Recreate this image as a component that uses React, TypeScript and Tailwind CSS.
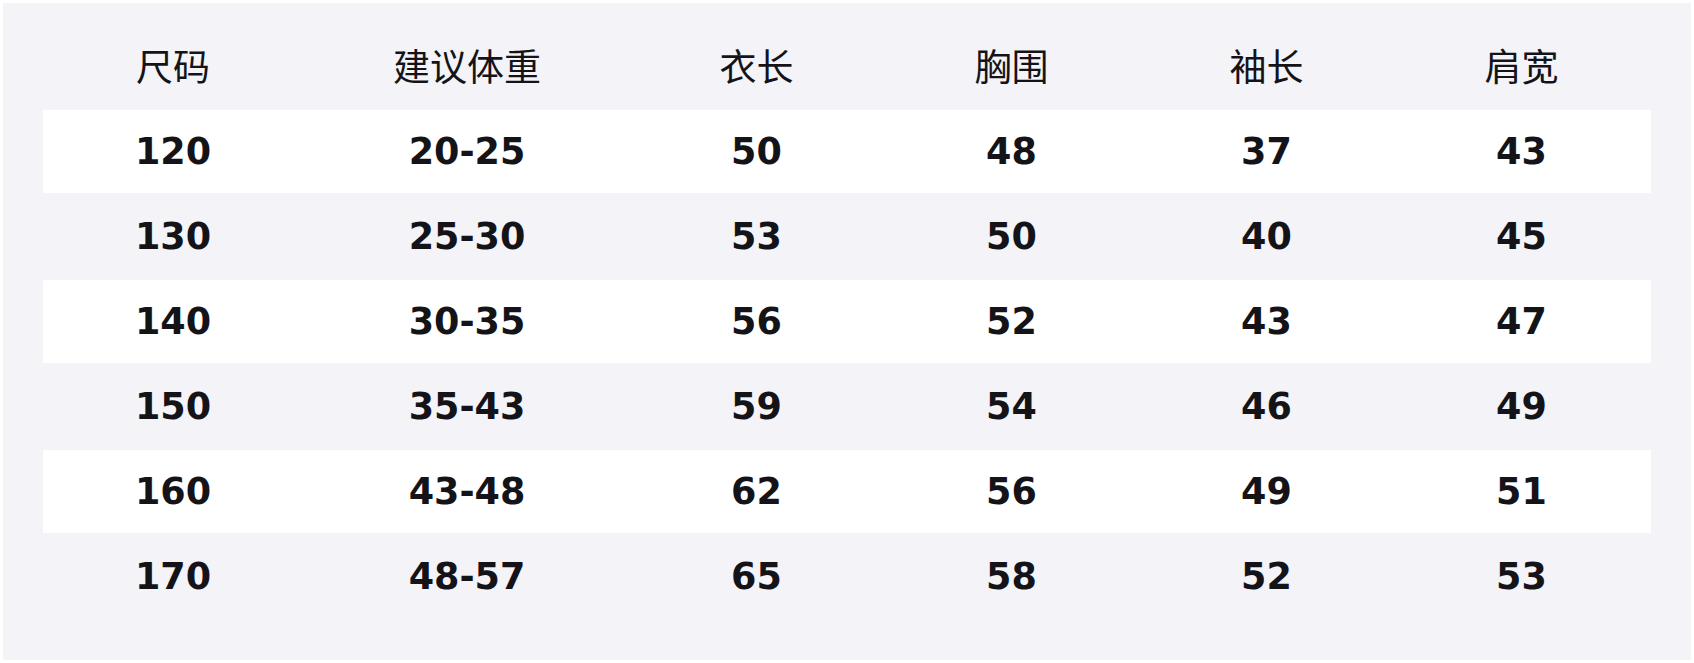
import React from "react";

const headers = ["尺码", "建议体重", "衣长", "胸围", "袖长", "肩宽"];
const rows = [
  ["120", "20-25", "50", "48", "37", "43"],
  ["130", "25-30", "53", "50", "40", "45"],
  ["140", "30-35", "56", "52", "43", "47"],
  ["150", "35-43", "59", "54", "46", "49"],
  ["160", "43-48", "62", "56", "49", "51"],
  ["170", "48-57", "65", "58", "52", "53"],
];

const cols = "grid grid-cols-[264px_324px_255px_255px_255px_255px]";

export default function App() {
  return (
    <div className="w-[1694px] h-[663px] bg-white p-[3px]">
      <div className="h-[657px] bg-[#f3f3f8] p-[40px]">
        <div className={`${cols} h-[67px] pt-[4px]`}>
          {headers.map((h) => (
            <div
              key={h}
              className="pr-[4px] text-center text-[37px] leading-none text-[#141418] font-['Noto_Sans_CJK_SC',sans-serif]"
            >
              {h}
            </div>
          ))}
        </div>
        {rows.map((r, i) => (
          <div
            key={i}
            className={`${cols} items-center ${i % 2 === 0 ? "h-[83px] bg-white" : "h-[87px]"}`}
          >
            {r.map((c, j) => (
              <div
                key={j}
                className="pr-[4px] pt-[2px] text-center text-[36.5px] leading-none font-bold text-[#141418] font-['DejaVu_Sans',sans-serif]"
              >
                {c}
              </div>
            ))}
          </div>
        ))}
      </div>
    </div>
  );
}
